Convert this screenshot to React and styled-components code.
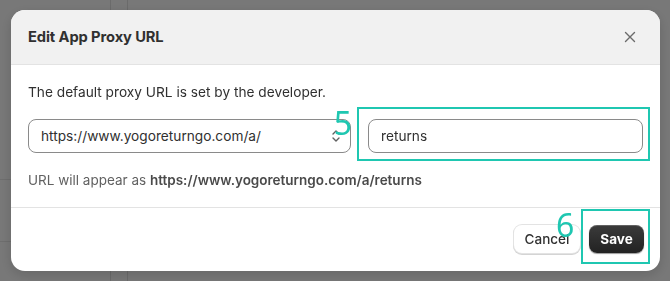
import React, { useState } from 'react';
import styled, { createGlobalStyle } from 'styled-components';

const GlobalStyle = createGlobalStyle`
  html, body { margin: 0; padding: 0; overflow: hidden; }
  body {
    font-family: Inter, "Noto Sans", "Liberation Sans", sans-serif;
    background: #f1f1f1;
    -webkit-font-smoothing: antialiased;
  }
  * { box-sizing: border-box; }
`;

const App = () => {
  const [path, setPath] = useState('returns');

  return (
    <>
      <GlobalStyle />
      <Page>
        <Sidebar>
          <SideRow />
          <SideRow />
        </Sidebar>
        <Rail />
        <Main />
      </Page>
      <Overlay>
        <Modal>
          <Header>
            <Title>Edit App Proxy URL</Title>
            <CloseButton aria-label="Close">
              <svg width="12" height="12" viewBox="0 0 12 12">
                <path d="M1.5 1.5l9 9M10.5 1.5l-9 9" stroke="#6b6b6b" strokeWidth="1.4" strokeLinecap="round" />
              </svg>
            </CloseButton>
          </Header>
          <Body>
            <Text>The default proxy URL is set by the developer.</Text>
            <FieldRow>
              <SelectBox>
                <span>https://www.yogoreturngo.com/a/</span>
                <svg width="10" height="14" viewBox="0 0 10 14">
                  <path d="M2 5l3-3 3 3M2 9l3 3 3-3" fill="none" stroke="#616161" strokeWidth="1.4" strokeLinecap="round" strokeLinejoin="round" />
                </svg>
                <StepNumber side="select">5</StepNumber>
              </SelectBox>
              <InputWrap>
                <TextInput value={path} onChange={e => setPath(e.target.value)} />
                <Highlight inset="-12px -7px -8px -11px" />
              </InputWrap>
            </FieldRow>
            <Helper>
              URL will appear as <strong>https://www.yogoreturngo.com/a/{path}</strong>
            </Helper>
          </Body>
          <Footer>
            <SecondaryButton>Cancel</SecondaryButton>
            <SaveWrap>
              <PrimaryButton>Save</PrimaryButton>
              <Highlight inset="-16px -6px -11px -8px" />
              <StepNumber side="save">6</StepNumber>
            </SaveWrap>
          </Footer>
        </Modal>
      </Overlay>
    </>
  );
};

export default App;

const Page = styled.div`
  height: 281px;
  overflow: hidden;
  display: grid;
  grid-template-columns: 111px 17px 1fr;
  background: #f1f1f1;
`;

const Sidebar = styled.div`
  display: flex;
  flex-direction: column;
  padding-top: 118px;
  border-right: 1px solid #d6d6d6;
`;

const SideRow = styled.div`
  height: 62px;
  border-bottom: 1px solid #dcdcdc;
`;

const Rail = styled.div`
  border-right: 1px solid #d6d6d6;
`;

const Main = styled.div`
  background: #f1f1f1;
`;

const Overlay = styled.div`
  position: fixed;
  inset: 0;
  background: rgba(0, 0, 0, 0.5);
  display: flex;
  align-items: flex-start;
  justify-content: flex-start;
  padding: 10px 10px 10px 11px;
`;

const Modal = styled.div`
  width: 649px;
  height: 261px;
  background: #fff;
  border-radius: 14px;
  overflow: hidden;
  display: flex;
  flex-direction: column;
  box-shadow: 0 4px 12px rgba(0, 0, 0, 0.15);
`;

const Header = styled.div`
  height: 55px;
  flex-shrink: 0;
  background: #f1f1f1;
  border-bottom: 1px solid #e3e3e3;
  display: flex;
  align-items: center;
  justify-content: space-between;
  padding: 0 16px 1px 17px;
`;

const Title = styled.h2`
  margin: 0;
  font-size: 14.7px;
  font-weight: 650;
  color: #303030;
  letter-spacing: -0.1px;
`;

const CloseButton = styled.button`
  width: 24px;
  height: 24px;
  border: none;
  background: transparent;
  display: flex;
  align-items: center;
  justify-content: center;
  padding: 0;
  margin-right: 2px;
  cursor: pointer;
`;

const Body = styled.div`
  padding: 17px;
  display: flex;
  flex-direction: column;
  gap: 17px;
  border-bottom: 1px solid #e3e3e3;
`;

const Text = styled.p`
  margin: 0;
  font-size: 13.7px;
  line-height: 20px;
  color: #303030;
`;

const FieldRow = styled.div`
  display: grid;
  grid-template-columns: 323px 1fr;
  gap: 17px;
`;

const SelectBox = styled.div`
  position: relative;
  height: 34px;
  border: 1px solid #8a8a8a;
  border-radius: 8px;
  display: flex;
  align-items: center;
  justify-content: space-between;
  padding: 0 12px;
  font-size: 13.7px;
  color: #303030;
  background: #fff;

  svg { margin-right: -3px; }
`;

const InputWrap = styled.div`
  position: relative;
`;

const TextInput = styled.input`
  width: 100%;
  height: 34px;
  border: 1px solid #8a8a8a;
  border-radius: 8px;
  padding: 0 12px;
  font-family: inherit;
  font-size: 13.7px;
  color: #303030;
  outline: none;
`;

const Highlight = styled.div`
  position: absolute;
  inset: ${props => props.inset};
  border: 2px solid #1fc7b1;
  pointer-events: none;
`;

const StepNumber = styled.span`
  position: absolute;
  font-family: "Noto Sans", "Open Sans", sans-serif;
  font-size: 32px;
  line-height: 1;
  color: #1fc7b1;
  ${props => props.side === 'select'
    ? 'right: -2px; top: -13px;'
    : 'left: -33px; top: -16px;'}
`;

const Helper = styled.p`
  margin: 0;
  font-size: 13.5px;
  line-height: 20px;
  color: #616161;

  strong {
    font-weight: 600;
    color: #4a4a4a;
  }
`;

const Footer = styled.div`
  flex: 1;
  display: flex;
  justify-content: flex-end;
  align-items: flex-start;
  gap: 9px;
  padding: 17px 16px 0 0;
`;

const SecondaryButton = styled.button`
  width: 66px;
  height: 28px;
  border: none;
  border-radius: 8px;
  background: #fff;
  box-shadow: 0 0 0 1px #e3e3e3, 0 1px 0 1px #d4d4d4;
  font-family: inherit;
  font-size: 13.5px;
  font-weight: 550;
  color: #303030;
  cursor: pointer;
`;

const SaveWrap = styled.div`
  position: relative;
`;

const PrimaryButton = styled.button`
  width: 55px;
  height: 28px;
  border: none;
  border-radius: 8px;
  background: linear-gradient(#3b3b3b, #222);
  box-shadow: inset 0 1px 0 rgba(255, 255, 255, 0.2), 0 1px 1px rgba(0, 0, 0, 0.4);
  font-family: inherit;
  font-size: 13.5px;
  font-weight: 700;
  color: #fff;
  cursor: pointer;
`;
